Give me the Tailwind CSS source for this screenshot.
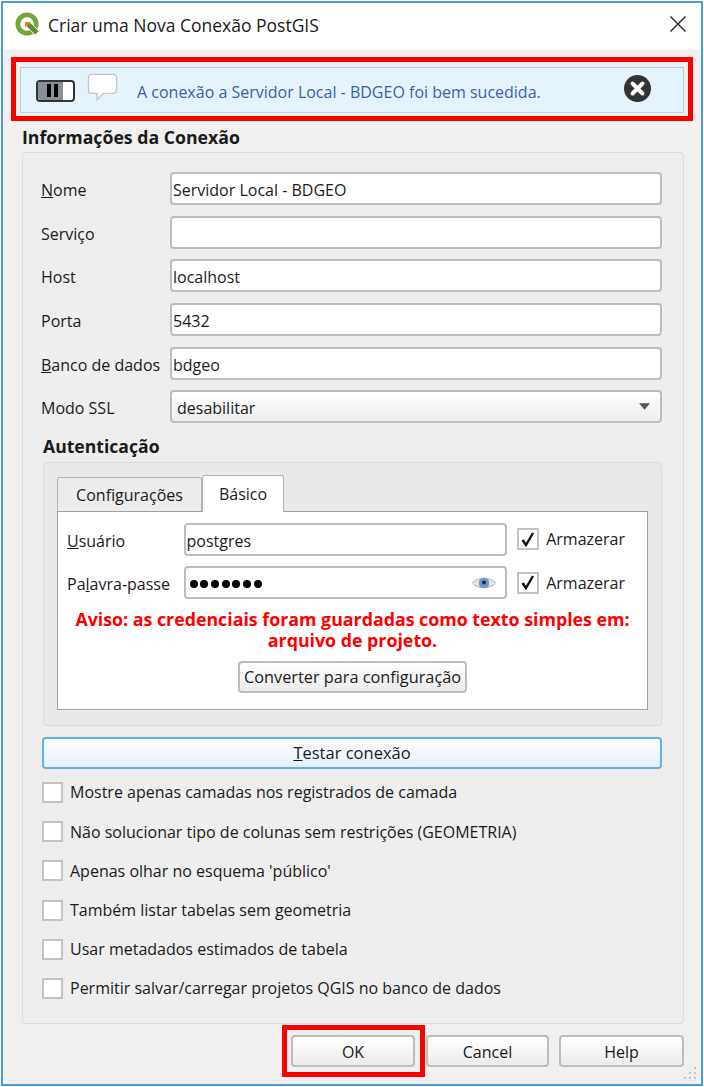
<!DOCTYPE html>
<html lang="pt">
<head>
  <meta charset="UTF-8" />
  <script src="https://cdn.jsdelivr.net/npm/@tailwindcss/browser@4"></script>
  <title>Criar uma Nova Conexão PostGIS</title>
</head>
<body class="bg-white">
  <div class="w-[704px] h-[1087px] pt-px pl-px pb-px font-['Open_Sans','Noto_Sans',sans-serif] text-[16px] text-[#1a1a1a] leading-none">
    <div class="w-[702px] h-[1085px] border-2 border-[#4d9ad6] bg-[#f0f0f0] flex flex-col relative">

      <!-- Title bar -->
      <div class="h-[47px] bg-white flex items-center pl-[12px] pr-[15px] shrink-0">
        <svg class="-mt-[4px]" width="25" height="25" viewBox="0 0 26 26" fill="none">
          <circle cx="12.500" cy="12.500" r="9.500" stroke="#77a53c" stroke-width="5"/>
          <path d="M11 11h5l9 9-4 4-9-9z" fill="#5d8f35" stroke="#fff" stroke-width="1"/>
          <path d="M10.500 10.500h5.500l-5.500 5.500z" fill="#ee7913"/>
        </svg>
        <span class="ml-[8px] text-[17.500px] -mt-[2px]">Criar uma Nova Conexão PostGIS</span>
        <svg class="ml-auto -mt-[5px]" width="16" height="16" viewBox="0 0 16 16"><path d="M.500 .500l15 15M15.500 .500l-15 15" stroke="#222" stroke-width="1.400"/></svg>
      </div>

      <!-- Message bar with red frame -->
      <div class="ml-[8px] mt-[7px] h-[64px] w-[682px] border-[5px] border-[#ff0000] shrink-0 pt-[5px] px-[4px]">
        <div class="h-[46px] bg-[#e5f3fc] border border-[#b3d0e6] flex items-center pl-[15px] text-[#3a5fae]">
          <div class="w-[39px] h-[22px] border-2 border-[#333] rounded-[4px] bg-white overflow-hidden flex mt-[1px]">
            <div class="w-[25px] h-full bg-[#8a8f96] flex items-center justify-center gap-[3px] pl-[3px]">
              <span class="w-[4px] h-[13px] bg-black"></span><span class="w-[4px] h-[13px] bg-black"></span>
            </div>
          </div>
          <svg class="ml-[12px] -mt-[5px]" width="31" height="29" viewBox="0 0 34 32" fill="#fff" stroke="#c4c7ca" stroke-width="1.500"><path d="M5 1.500h24a3.500 3.500 0 0 1 3.500 3.500v14a3.500 3.500 0 0 1-3.500 3.500H18l-7 7v-7H5A3.500 3.500 0 0 1 1.500 19V5A3.500 3.500 0 0 1 5 1.500z"/></svg>
          <span class="ml-[19px] mt-[3px]">A conexão a Servidor Local - BDGEO foi bem sucedida.</span>
          <svg class="ml-auto mr-[32px] -mt-[3px]" width="27" height="27" viewBox="0 0 27 27"><circle cx="13.500" cy="13.500" r="13.500" fill="#333"/><path d="M8.500 8.500l10 10M18.500 8.500l-10 10" stroke="#fff" stroke-width="4" stroke-linecap="round"/></svg>
        </div>
      </div>

      <!-- Connection info -->
      <h2 class="ml-[19px] mt-[8px] font-bold text-[17.700px] h-[17px] shrink-0">Informações da Conexão</h2>
      <div class="ml-[19px] mt-[6px] w-[662px] h-[872px] border border-[#dcdcdc] rounded-[3px] bg-[#eeeeee] shrink-0 pt-[19px] pl-[18px] pr-[21px]">
        <div class="flex flex-col gap-[10.700px]">
          <div class="flex items-center h-[33px]"><label class="w-[129px] pt-[3px]"><u>N</u>ome</label><div class="flex-1 h-full bg-white border-2 border-[#bdbdbd] rounded-[4px] flex items-center pl-[1px] pt-[3px]">Servidor Local - BDGEO</div></div>
          <div class="flex items-center h-[33px]"><label class="w-[129px] pt-[3px]">Serviço</label><div class="flex-1 h-full bg-white border-2 border-[#bdbdbd] rounded-[4px] flex items-center pl-[1px] pt-[3px]"></div></div>
          <div class="flex items-center h-[33px]"><label class="w-[129px] pt-[3px]">Host</label><div class="flex-1 h-full bg-white border-2 border-[#bdbdbd] rounded-[4px] flex items-center pl-[1px] pt-[3px]">localhost</div></div>
          <div class="flex items-center h-[33px]"><label class="w-[129px] pt-[3px]">Porta</label><div class="flex-1 h-full bg-white border-2 border-[#bdbdbd] rounded-[4px] flex items-center pl-[1px] pt-[3px]">5432</div></div>
          <div class="flex items-center h-[33px]"><label class="w-[129px] pt-[3px]"><u>B</u>anco de dados</label><div class="flex-1 h-full bg-white border-2 border-[#bdbdbd] rounded-[4px] flex items-center pl-[1px] pt-[3px]">bdgeo</div></div>
          <div class="flex items-center h-[33px]"><label class="w-[129px] pt-[3px]">Modo SSL</label><div class="flex-1 h-full bg-linear-to-b from-white to-[#ececec] border-2 border-[#bdbdbd] rounded-[4px] flex items-center pl-[5px] pr-[10px] pt-[3px]">desabilitar<svg class="ml-auto -mt-[3px]" width="11" height="7" viewBox="0 0 12 7"><path d="M0 0h12L6 7z" fill="#555"/></svg></div></div>
        </div>

        <!-- Authentication -->
        <h3 class="ml-[2px] mt-[15px] font-bold text-[17.600px] h-[17px]">Autenticação</h3>
        <div class="ml-[2px] mt-[6.500px] w-[619px] h-[264px] border border-[#dcdcdc] rounded-[3px] bg-[#e9e9e9] pt-[11px] pl-[13px]">
          <div class="flex items-end h-[37px] relative z-10">
            <div class="w-[145px] h-[34px] bg-[#ececec] border border-[#b5b5b5] border-b-0 rounded-t-[3px] flex items-center justify-center pt-px">Configurações</div>
            <div class="w-[82px] h-[37px] bg-white border border-[#b5b5b5] border-b-0 rounded-t-[3px] flex items-center justify-center -mb-px">Básico</div>
          </div>
          <div class="w-[591px] h-[199px] bg-white border border-[#a0a0a0] pt-[11px] pl-[9px] pr-[22px]">
            <div class="flex items-center h-[33px]"><label class="w-[117px] pt-[3px]"><u>U</u>suário</label><div class="w-[325px] h-full border-2 border-[#bdbdbd] rounded-[4px] flex items-center pl-[1px] pt-[3px]">postgres</div><span class="ml-[10px] w-[22px] h-[22px] border-2 border-[#c4c4c4] flex items-center justify-center"><svg width="14" height="15" viewBox="0 0 14 15" fill="none"><path d="M1.500 8l3.500 5 7-12" stroke="#111" stroke-width="2.400"/></svg></span><span class="ml-[7px]">Armazerar</span></div>
            <div class="flex items-center h-[33px] mt-[10.500px]"><label class="w-[117px] pt-[3px]">Pa<u>l</u>avra-passe</label><div class="w-[325px] h-full border-2 border-[#bdbdbd] rounded-[4px] flex items-center pl-[4px] pr-[9px] gap-[2.700px] pt-[3px]"><span class="size-[8px] rounded-full bg-black"></span><span class="size-[8px] rounded-full bg-black"></span><span class="size-[8px] rounded-full bg-black"></span><span class="size-[8px] rounded-full bg-black"></span><span class="size-[8px] rounded-full bg-black"></span><span class="size-[8px] rounded-full bg-black"></span><span class="size-[8px] rounded-full bg-black"></span><svg class="ml-auto -mt-[3px]" width="24" height="16" viewBox="0 0 25 16"><path d="M.500 8C5 1.500 20 1.500 24.500 8 20 14.500 5 14.500 .500 8z" fill="#e4e4e4" stroke="#b5b5b5"/><circle cx="12.500" cy="8" r="5.500" fill="#6d97c6"/><circle cx="12.500" cy="7.500" r="2" fill="#1c2a3a"/></svg></div><span class="ml-[10px] w-[22px] h-[22px] border-2 border-[#c4c4c4] flex items-center justify-center"><svg width="14" height="15" viewBox="0 0 14 15" fill="none"><path d="M1.500 8l3.500 5 7-12" stroke="#111" stroke-width="2.400"/></svg></span><span class="ml-[7px]">Armazerar</span></div>
            <p class="mt-[10px] -ml-[9px] -mr-[22px] text-center font-bold text-[#ff0000] text-[17.800px] leading-[21px]">Aviso: as credenciais foram guardadas como texto simples em:<br>arquivo de projeto.</p>
            <div class="mt-[10px] ml-[171px] w-[229px] h-[32px] bg-linear-to-b from-white to-[#ececec] border-2 border-[#bdbdbd] rounded-[4px] flex items-center justify-center text-[16.300px]">Converter para configuração</div>
          </div>
        </div>

        <div class="mt-[11px] ml-px w-[620px] h-[32px] bg-linear-to-b from-white to-[#e3f0fb] border-2 border-[#5fb2ea] rounded-[4px] flex items-center justify-center text-[16.500px]"><span><u>T</u>estar conexão</span></div>

        <div class="mt-[13px] ml-px flex flex-col gap-[18.200px]">
          <div class="flex items-center h-[21px]"><span class="w-[21px] h-[21px] bg-white border-2 border-[#c4c4c4]"></span><span class="ml-[7px]">Mostre apenas camadas nos registrados de camada</span></div>
          <div class="flex items-center h-[21px]"><span class="w-[21px] h-[21px] bg-white border-2 border-[#c4c4c4]"></span><span class="ml-[7px]">Não solucionar tipo de colunas sem restrições (GEOMETRIA)</span></div>
          <div class="flex items-center h-[21px]"><span class="w-[21px] h-[21px] bg-white border-2 border-[#c4c4c4]"></span><span class="ml-[7px]">Apenas olhar no esquema 'público'</span></div>
          <div class="flex items-center h-[21px]"><span class="w-[21px] h-[21px] bg-white border-2 border-[#c4c4c4]"></span><span class="ml-[7px]">Também listar tabelas sem geometria</span></div>
          <div class="flex items-center h-[21px]"><span class="w-[21px] h-[21px] bg-white border-2 border-[#c4c4c4]"></span><span class="ml-[7px]">Usar metadados estimados de tabela</span></div>
          <div class="flex items-center h-[21px]"><span class="w-[21px] h-[21px] bg-white border-2 border-[#c4c4c4]"></span><span class="ml-[7px]">Permitir salvar/carregar projetos QGIS no banco de dados</span></div>
        </div>
      </div>

      <!-- Buttons -->
      <div class="mt-[11px] ml-[288px] flex h-[32px] shrink-0">
        <div class="relative w-[124px] h-full bg-linear-to-b from-white to-[#ececec] border-2 border-[#bdbdbd] rounded-[4px] flex items-center justify-center pt-[2px]">OK<div class="absolute -top-[12px] -left-[11px] w-[143px] h-[52px] border-[5px] border-[#ff0000]"></div></div>
        <div class="ml-[11px] w-[123px] h-full bg-linear-to-b from-white to-[#ececec] border-2 border-[#bdbdbd] rounded-[4px] flex items-center justify-center pt-[2px]">Cancel</div>
        <div class="ml-[10px] w-[125px] h-full bg-linear-to-b from-white to-[#ececec] border-2 border-[#bdbdbd] rounded-[4px] flex items-center justify-center pt-[2px]">Help</div>
      </div>

      <!-- Resize grip -->
      <svg class="absolute right-[3px] bottom-[2px]" width="16" height="16" viewBox="0 0 16 16" fill="#c4c4c4"><rect x="12" y="1" width="2" height="2"/><rect x="12" y="6" width="2" height="2"/><rect x="7" y="6" width="2" height="2"/><rect x="12" y="11" width="2" height="2"/><rect x="7" y="11" width="2" height="2"/><rect x="2" y="11" width="2" height="2"/></svg>
    </div>
  </div>
</body>
</html>
